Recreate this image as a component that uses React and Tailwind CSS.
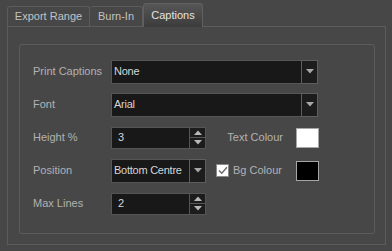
import React from "react";

const font = { fontFamily: '"Liberation Sans", Arial, sans-serif' };

function DownArrow({ color = "#a8a8a8" }) {
  return (
    <svg width="8" height="5" viewBox="0 0 8 5">
      <path d="M0 0 H8 L4 4.5 Z" fill={color} />
    </svg>
  );
}

function UpArrow({ color = "#b8b8b8" }) {
  return (
    <svg width="8" height="5" viewBox="0 0 8 5">
      <path d="M0 5 H8 L4 0.5 Z" fill={color} />
    </svg>
  );
}

function Combo({ value, width }) {
  return (
    <div className={`flex h-[24px] ${width}`}>
      <div className="flex flex-1 items-center overflow-hidden whitespace-nowrap border border-[#555] border-r-0 bg-[#181818] pl-[2px] text-[11px] tracking-[-0.25px] text-[#d6d6d6]">
        {value}
      </div>
      <div className="flex w-[17px] items-center justify-center border border-[#5e5e5e] bg-[#1c1c1c]">
        <DownArrow />
      </div>
    </div>
  );
}

function Spin({ value }) {
  return (
    <div className="flex h-[22px] w-[95px]">
      <div className="flex flex-1 items-center border border-[#555] border-r-0 bg-[#181818] pl-[6px] text-[11px] text-[#d6d6d6]">
        {value}
      </div>
      <div className="flex w-[17px] flex-col gap-px border border-[#555] bg-[#555]">
        <div className="flex flex-1 items-center justify-center bg-[#1c1c1c]">
          <UpArrow />
        </div>
        <div className="flex flex-1 items-center justify-center bg-[#1c1c1c]">
          <DownArrow color="#b8b8b8" />
        </div>
      </div>
    </div>
  );
}

function Row({ label, children }) {
  return (
    <div className="flex h-[33px] items-center">
      <div className="w-[78px] text-[11px] text-[#b2b2b2]">{label}</div>
      {children}
    </div>
  );
}

export default function App() {
  return (
    <div className="h-[251px] w-[392px] overflow-hidden bg-[#474747] pl-[7px] pt-[3px]" style={font}>
      {/* tabs */}
      <div className="relative z-10 flex h-[23px] items-end text-[11px]">
        <div className="flex h-[20px] w-[83px] items-center justify-center rounded-t-[3px] border border-b-0 border-[#5c5c5c] bg-[#474747] text-[#c2c2c2]">
          Export Range
        </div>
        <div className="flex h-[20px] w-[53px] items-center justify-center rounded-t-[3px] border border-b-0 border-l-0 border-[#5c5c5c] bg-[#474747] text-[#c2c2c2]">
          Burn-In
        </div>
        <div className="-mb-px flex h-[24px] w-[60px] items-center justify-center rounded-t-[3px] border border-b-0 border-[#606060] bg-gradient-to-b from-[#565656] to-[#3c3c3c] text-[#e4e4e4]">
          Captions
        </div>
      </div>

      {/* panel */}
      <div className="h-[219px] w-[379px] border border-[#5c5c5c] pl-[11px] pr-[10px] pt-[17px]">
        <div className="h-[190px] rounded-[3px] border border-[#5c5c5c] pl-[13px] pt-[10px]">
          <Row label="Print Captions">
            <Combo value="None" width="w-[207px]" />
          </Row>
          <Row label="Font">
            <Combo value="Arial" width="w-[207px]" />
          </Row>
          <Row label="Height %">
            <Spin value="3" />
            <div className="flex w-[113px] items-center justify-end">
              <span className="mr-[13px] text-[11px] text-[#b2b2b2]">Text Colour</span>
              <div className="h-[20px] w-[23px] border border-[#a6a6a6] bg-white" />
            </div>
          </Row>
          <Row label="Position">
            <Combo value="Bottom Centre" width="w-[95px]" />
            <div className="flex w-[113px] items-center pl-[10px]">
              <div className="flex h-[13px] w-[13px] items-center justify-center border border-[#8a8a8a] bg-white">
                <svg width="10" height="9" viewBox="0 0 10 9">
                  <path d="M1 4.5 L3.8 7.3 L9 1.2" fill="none" stroke="#6a6a6a" strokeWidth="1.4" />
                </svg>
              </div>
              <span className="ml-[4px] text-[11px] text-[#b2b2b2]">Bg Colour</span>
              <div className="ml-auto h-[20px] w-[23px] border border-[#a6a6a6] bg-black" />
            </div>
          </Row>
          <Row label="Max Lines">
            <Spin value="2" />
          </Row>
        </div>
      </div>
    </div>
  );
}
